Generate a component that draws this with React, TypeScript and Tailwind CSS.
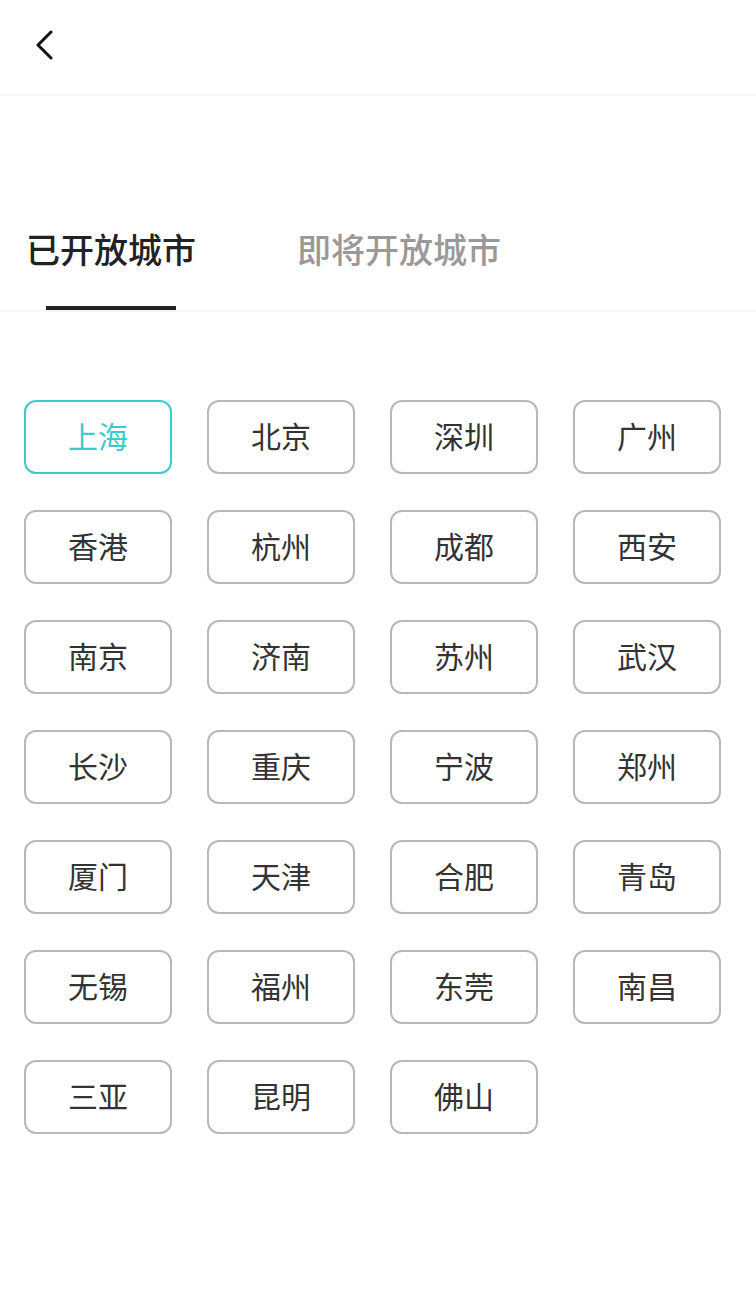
import React from "react";

const cities = [
  "上海", "北京", "深圳", "广州",
  "香港", "杭州", "成都", "西安",
  "南京", "济南", "苏州", "武汉",
  "长沙", "重庆", "宁波", "郑州",
  "厦门", "天津", "合肥", "青岛",
  "无锡", "福州", "东莞", "南昌",
  "三亚", "昆明", "佛山",
];

export default function App() {
  return (
    <div
      className="w-[756px] h-[1310px] bg-white"
      style={{ fontFamily: '"Noto Sans CJK SC", "Noto Sans", sans-serif' }}
    >
      <div className="h-[96px] border-b-2 border-[#f7f7f7] flex items-center pl-[34px]">
        <svg width="20" height="30" viewBox="0 0 20 30" className="-mt-[4px]">
          <path d="M17 2 L4 15 L17 28" fill="none" stroke="#111" strokeWidth="3" strokeLinecap="round" strokeLinejoin="round" />
        </svg>
      </div>
      <div className="h-[216px] border-b-2 border-[#f7f7f7] flex items-end">
        <div className="flex pl-[26px] gap-[101px]">
          <div className="flex flex-col items-center">
            <div className="text-[34px] leading-[40px] text-[#222] font-medium">已开放城市</div>
            <div className="mt-[37px] w-[130px] h-[4px] bg-[#222]" />
          </div>
          <div className="flex flex-col items-center">
            <div className="text-[34px] leading-[40px] text-[#999] font-medium">即将开放城市</div>
            <div className="mt-[37px] w-[130px] h-[4px] bg-transparent" />
          </div>
        </div>
      </div>
      <div className="grid grid-cols-[148px_148px_148px_148px] gap-x-[35px] gap-y-[36px] pl-[24px] pt-[88px]">
        {cities.map((c, i) => (
          <div
            key={c}
            className={
              i === 0
                ? "h-[74px] pb-[3px] rounded-[12px] border-2 border-[#3ccaca] flex items-center justify-center text-[30px] text-[#3ccaca]"
                : "h-[74px] pb-[3px] rounded-[12px] border-2 border-[#b8b8b8] flex items-center justify-center text-[30px] text-[#333]"
            }
          >
            {c}
          </div>
        ))}
      </div>
    </div>
  );
}
